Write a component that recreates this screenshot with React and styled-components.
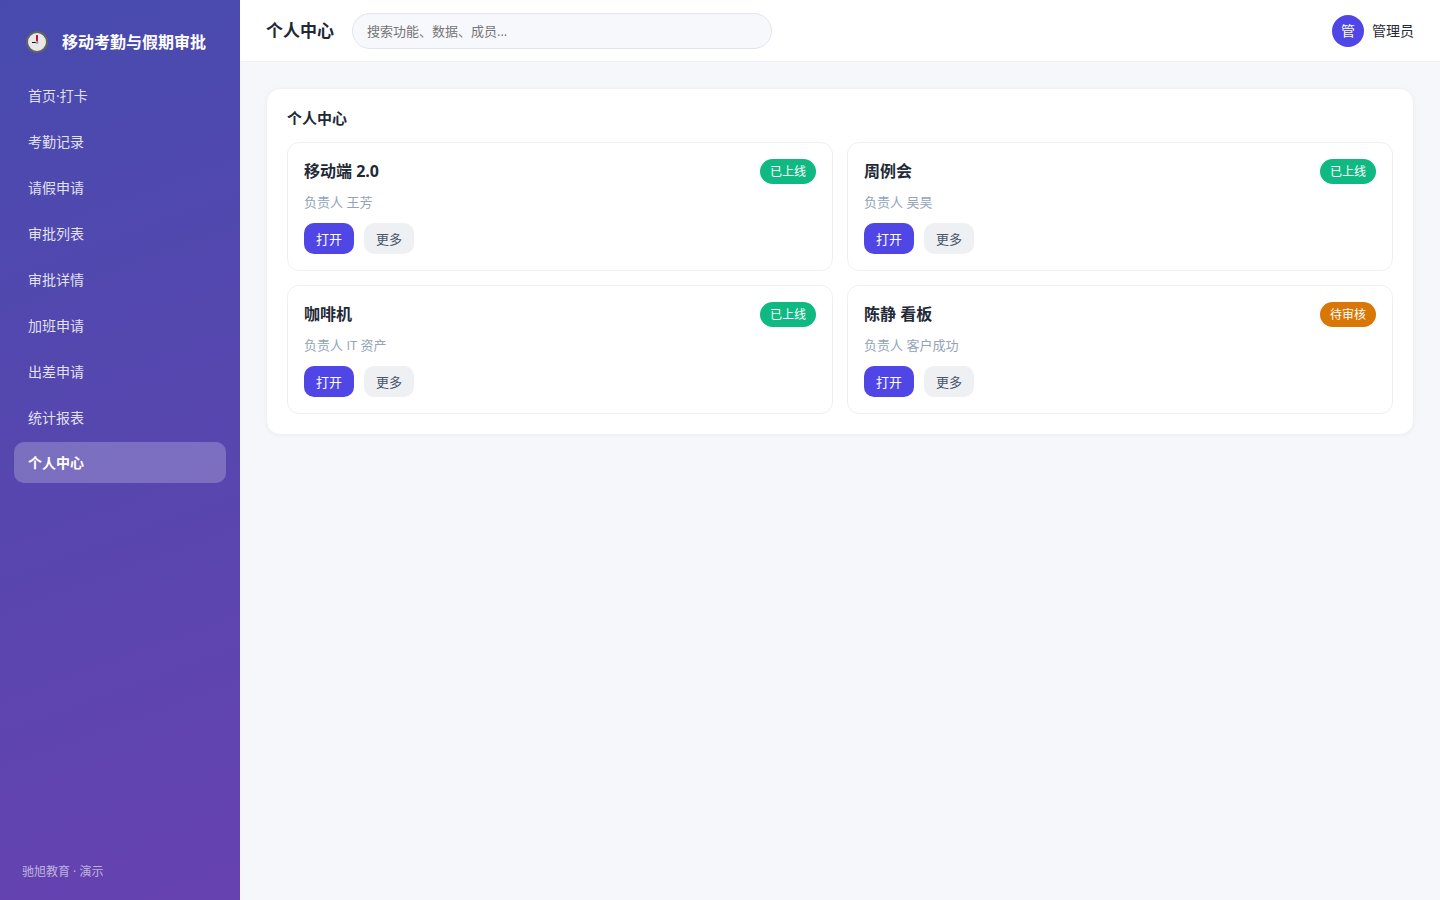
import React, { useState } from "react";
import styled, { createGlobalStyle } from "styled-components";

const GlobalStyle = createGlobalStyle`
  * {
    box-sizing: border-box;
  }

  body {
    margin: 0;
    background: #f5f7fb;
    color: #1f2937;
    font-family: "Open Sans", "Noto Sans CJK SC", sans-serif;
    font-size: 14px;
  }

  button,
  input {
    font-family: inherit;
  }
`;

const Layout = styled.div`
  display: flex;
  min-height: 100vh;
`;

const Sidebar = styled.aside`
  flex: 0 0 240px;
  display: flex;
  flex-direction: column;
  padding: 22px 14px 18px;
  background: linear-gradient(160deg, #484bae 0%, #6642b0 100%);
  color: white;
`;

const Brand = styled.div`
  display: flex;
  align-items: center;
  gap: 14px;
  padding: 2px 12px 0;
  margin-bottom: 14px;
  line-height: 36px;
  font-size: 16px;
  font-weight: 700;
  white-space: nowrap;

  svg {
    flex: none;
  }
`;

const Nav = styled.nav`
  display: flex;
  flex-direction: column;
  gap: 4px;
`;

const NavItem = styled.a`
  padding: ${(p) => (p.$active ? "10px 14px" : "11px 14px 9px")};
  border-radius: 10px;
  font-size: 14px;
  line-height: ${(p) => (p.$active ? "21px" : "22px")};
  font-weight: ${(p) => (p.$active ? 700 : 400)};
  color: ${(p) => (p.$active ? "#fff" : "rgba(255, 255, 255, 0.85)")};
  background: ${(p) => (p.$active ? "rgba(255, 255, 255, 0.22)" : "transparent")};
  text-decoration: none;
`;

const SidebarFooter = styled.div`
  margin-top: auto;
  padding: 0 8px;
  font-size: 12px;
  line-height: 20px;
  color: rgba(255, 255, 255, 0.6);
`;

const Main = styled.div`
  flex: 1;
  min-width: 0;
`;

const Topbar = styled.header`
  display: flex;
  align-items: center;
  gap: 18px;
  padding: 12px 26px;
  background: white;
  border-bottom: 1px solid #eef0f4;
`;

const PageTitle = styled.h1`
  margin: 0;
  font-size: 17px;
  line-height: 24px;
  font-weight: 700;
  white-space: nowrap;
`;

const Search = styled.input`
  flex: 0 1 420px;
  min-width: 0;
  height: 36px;
  padding: 0 14px;
  border: 1px solid #e2e5ec;
  border-radius: 18px;
  background: #f7f8fc;
  font-size: 13px;
  outline: none;

  &::placeholder {
    color: #757575;
  }
`;

const User = styled.div`
  display: flex;
  align-items: center;
  gap: 8px;
  margin-left: auto;
  line-height: 37px;
  white-space: nowrap;
`;

const Avatar = styled.span`
  width: 32px;
  height: 32px;
  border-radius: 50%;
  background: #4f46e5;
  color: white;
  line-height: 32px;
  text-align: center;
`;

const Content = styled.main`
  padding: 26px;
`;

const Panel = styled.section`
  padding: 20px;
  background: white;
  border: 1px solid #eef0f4;
  border-radius: 14px;
  box-shadow: 0 1px 4px rgba(15, 23, 42, 0.04);
`;

const PanelTitle = styled.h2`
  margin: 0 0 14px;
  font-size: 15px;
  line-height: 19px;
  font-weight: 700;
`;

const Grid = styled.div`
  display: grid;
  grid-template-columns: repeat(2, minmax(0, 1fr));
  gap: 14px;
`;

const Card = styled.article`
  padding: 16px;
  border: 1px solid #eef0f4;
  border-radius: 12px;
`;

const CardHead = styled.div`
  display: flex;
  align-items: center;
  justify-content: space-between;
`;

const CardTitle = styled.h3`
  margin: 0;
  font-size: 16px;
  line-height: 25px;
  font-weight: 700;
`;

const Badge = styled.span`
  padding: 0 10px;
  border-radius: 13px;
  background: ${(p) => (p.$pending ? "#d97706" : "#10b981")};
  color: white;
  font-size: 12px;
  line-height: 25px;
`;

const Owner = styled.p`
  margin: 8px 0 10px;
  font-size: 13px;
  line-height: 21px;
  color: #94a3b8;
`;

const Actions = styled.div`
  display: flex;
  gap: 10px;
`;

const Button = styled.button`
  height: 31px;
  padding: 0 12px;
  border: none;
  border-radius: 10px;
  background: ${(p) => (p.$primary ? "#4f46e5" : "#eef0f4")};
  color: ${(p) => (p.$primary ? "#fff" : "#475569")};
  font-size: 13px;
  cursor: pointer;
`;

const navItems = [
  "首页·打卡",
  "考勤记录",
  "请假申请",
  "审批列表",
  "审批详情",
  "加班申请",
  "出差申请",
  "统计报表",
  "个人中心",
];

const cards = [
  { title: "移动端 2.0", owner: "王芳", status: "已上线" },
  { title: "周例会", owner: "吴昊", status: "已上线" },
  { title: "咖啡机", owner: "IT 资产", status: "已上线" },
  { title: "陈静 看板", owner: "客户成功", status: "待审核" },
];

const ClockIcon = () => (
  <svg width="22" height="22" viewBox="0 0 22 22" aria-hidden="true">
    <circle cx="11" cy="11" r="10" fill="#e8e8e8" stroke="#636363" strokeWidth="2" />
    <path d="M6 11.5h4" stroke="#111" strokeWidth="1" />
    <path d="M11 4v6" stroke="#c50f3c" strokeWidth="2" />
    <circle cx="11" cy="11.5" r="1.4" fill="#999" />
  </svg>
);

export default function App() {
  const [query, setQuery] = useState("");

  return (
    <>
      <GlobalStyle />
      <Layout>
        <Sidebar>
          <Brand>
            <ClockIcon />
            <span>移动考勤与假期审批</span>
          </Brand>
          <Nav>
            {navItems.map((item) => (
              <NavItem key={item} href="#" $active={item === "个人中心"}>
                {item}
              </NavItem>
            ))}
          </Nav>
          <SidebarFooter>驰旭教育 · 演示</SidebarFooter>
        </Sidebar>

        <Main>
          <Topbar>
            <PageTitle>个人中心</PageTitle>
            <Search
              type="text"
              aria-label="搜索"
              placeholder="搜索功能、数据、成员..."
              value={query}
              onChange={(e) => setQuery(e.target.value)}
            />
            <User>
              <Avatar>管</Avatar>
              <span>管理员</span>
            </User>
          </Topbar>

          <Content>
            <Panel>
              <PanelTitle>个人中心</PanelTitle>
              <Grid>
                {cards.map((card) => (
                  <Card key={card.title}>
                    <CardHead>
                      <CardTitle>{card.title}</CardTitle>
                      <Badge $pending={card.status === "待审核"}>{card.status}</Badge>
                    </CardHead>
                    <Owner>负责人 {card.owner}</Owner>
                    <Actions>
                      <Button type="button" $primary>打开</Button>
                      <Button type="button">更多</Button>
                    </Actions>
                  </Card>
                ))}
              </Grid>
            </Panel>
          </Content>
        </Main>
      </Layout>
    </>
  );
}
